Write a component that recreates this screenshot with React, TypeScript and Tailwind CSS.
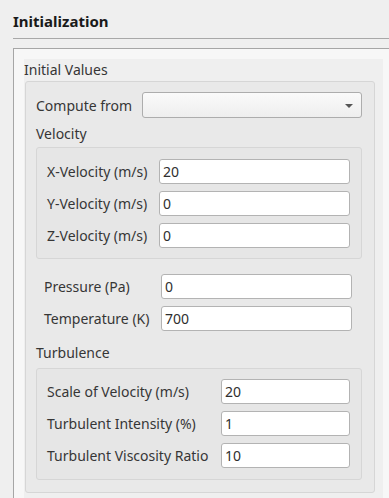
import React from "react";

const Field = ({ value, w }: { value: string; w: string }) => (
  <div
    className={`${w} h-[25px] bg-white border border-[#b3b3b3] rounded-[3px] flex items-center pl-[3px] text-[14px] text-[#2e2e2e]`}
  >
    {value}
  </div>
);

export default function App() {
  return (
    <div
      className="w-[389px] h-[498px] bg-[#efefef] overflow-hidden text-[#363636]"
      style={{ fontFamily: '"Noto Sans", sans-serif' }}
    >
      <div className="h-[38px] pl-[13px] flex items-center pt-[4px]">
        <span className="text-[15px] font-bold text-[#1a1a1a]">Initialization</span>
      </div>
      <div className="ml-[13px] h-px bg-[#a8a8a8]" />
      <div className="h-[9px]" />
      <div className="ml-[13px] h-[460px] border-l border-t border-[#a6a6a6] bg-[#f7f7f7] pl-[10px] pt-[10px]">
        <div className="w-[359px] h-[440px] bg-[#efefef]">
          <div className="h-[22px] flex items-center text-[14px] leading-none">Initial Values</div>
          <div className="ml-px w-[350px] h-[412px] border border-[#d6d6d6] rounded-[3px] bg-[#e9e9e9] pl-[10px] pt-[10px]">
            <div className="flex items-center h-[26px]">
              <span className="w-[106px] text-[14px] whitespace-nowrap">Compute from</span>
              <div className="w-[220px] h-[26px] border border-[#adadad] rounded-[3px] bg-gradient-to-b from-[#fafafa] to-[#eeeeee] relative">
                <svg className="absolute right-[8px] top-[11px]" width="8" height="4" viewBox="0 0 8 4">
                  <path d="M0 0 L8 0 L4 4 Z" fill="#555" />
                </svg>
              </div>
            </div>
            <div className="h-[28px] flex items-center text-[14px] mt-[1px]">Velocity</div>
            <div className="w-[326px] h-[112px] border border-[#d6d6d6] rounded-[3px] bg-[#e6e6e6] pl-[10px] pt-[11px] flex flex-col gap-[7px]">
              {[
                ["X-Velocity (m/s)", "20"],
                ["Y-Velocity (m/s)", "0"],
                ["Z-Velocity (m/s)", "0"],
              ].map(([l, v]) => (
                <div key={l} className="flex items-center h-[25px]">
                  <span className="w-[112px] text-[14px] whitespace-nowrap">{l}</span>
                  <Field value={v} w="w-[191px]" />
                </div>
              ))}
            </div>
            <div className="pl-[8px] pt-[15px] flex flex-col gap-[7px]">
              {[
                ["Pressure (Pa)", "0"],
                ["Temperature (K)", "700"],
              ].map(([l, v]) => (
                <div key={l} className="flex items-center h-[25px]">
                  <span className="w-[117px] text-[14px] whitespace-nowrap">{l}</span>
                  <Field value={v} w="w-[191px]" />
                </div>
              ))}
            </div>
            <div className="h-[37px] flex items-center text-[14px] pt-[6px]">Turbulence</div>
            <div className="w-[326px] h-[112px] border border-[#d6d6d6] rounded-[3px] bg-[#e6e6e6] pl-[10px] pt-[10px] flex flex-col gap-[7px]">
              {[
                ["Scale of Velocity (m/s)", "20"],
                ["Turbulent Intensity (%)", "1"],
                ["Turbulent Viscosity Ratio", "10"],
              ].map(([l, v]) => (
                <div key={l} className="flex items-center h-[25px]">
                  <span className="w-[174px] text-[14px] whitespace-nowrap">{l}</span>
                  <Field value={v} w="w-[129px]" />
                </div>
              ))}
            </div>
          </div>
        </div>
      </div>
    </div>
  );
}
